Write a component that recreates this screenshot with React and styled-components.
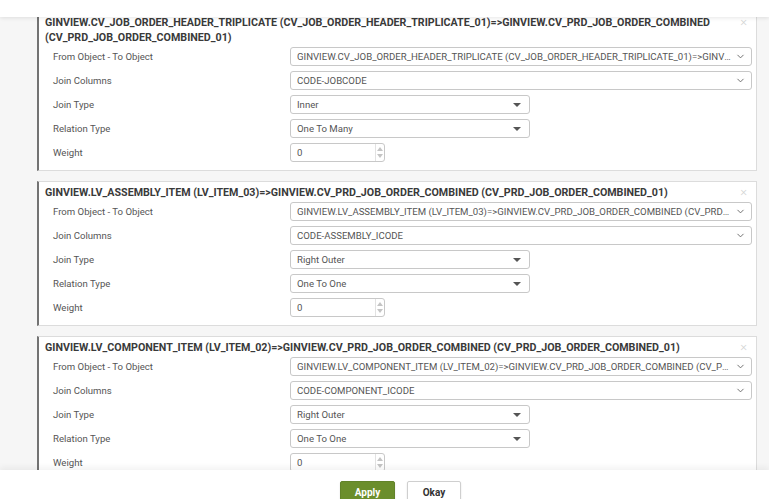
import React from 'react'
import styled, { createGlobalStyle } from 'styled-components'
import { ChevronDown } from 'lucide-react'

const GlobalStyle = createGlobalStyle`
  html, body, #root {
    margin: 0;
    height: 100%;
  }
  body {
    font-family: Roboto, "Liberation Sans", Arial, sans-serif;
    background: #f6f6f6;
    color: #555;
  }
  * { box-sizing: border-box; }
`

const Page = styled.div`
  height: 100vh;
  display: flex;
  flex-direction: column;
  overflow: hidden;
`

const TopBar = styled.div`
  height: 17px;
  flex-shrink: 0;
  background: #fff;
  box-shadow: 0 1px 4px rgba(0, 0, 0, 0.1);
  position: relative;
  z-index: 2;
`

const Body = styled.div`
  flex: 1;
  overflow: hidden;
  padding: 0 12px 0 37px;
`

const List = styled.div`
  display: flex;
  flex-direction: column;
  gap: 10px;
  margin-top: -6px;
`

const Card = styled.div`
  position: relative;
  background: #fff;
  border: 1px solid #dcdcdc;
  border-left: 2px solid #737373;
  padding: 3px 4px 8px 6px;
`

const CardTitle = styled.div`
  font-size: 10.7px;
  font-weight: 700;
  line-height: 15px;
  color: #3a3a3a;
  padding-right: 30px;
  margin-bottom: 2px;
`

const Close = styled.span`
  position: absolute;
  top: 3px;
  right: 9px;
  font-size: 13px;
  line-height: 14px;
  font-weight: 300;
  color: #d4d4d4;
`

const Rows = styled.div`
  display: flex;
  flex-direction: column;
  gap: 5px;
`

const Row = styled.div`
  display: grid;
  grid-template-columns: 245px minmax(0, 1fr);
  align-items: center;
  height: 19px;
`

const Label = styled.label`
  font-size: 9.6px;
  color: #555;
  padding-left: 8px;
`

const Field = styled.div`
  width: ${({ w }) => (w ? `${w}px` : '100%')};
  min-width: 0;
  height: 19px;
  border: 1px solid #c8c8c8;
  border-radius: 3px;
  background: #fff;
  display: flex;
  align-items: center;
  gap: 2px;
  padding: 0 5px 0 6px;
  font-size: 9.6px;
  color: #555;
  overflow: hidden;
`

const FieldText = styled.span`
  flex: 1;
  min-width: 0;
  white-space: nowrap;
  overflow: hidden;
  text-overflow: ellipsis;
`

const Caret = styled.span`
  width: 0;
  height: 0;
  border-left: 4px solid transparent;
  border-right: 4px solid transparent;
  border-top: 4px solid #555;
  margin-right: 3px;
`

const NumberField = styled(Field)`
  padding-right: 0;
`

const Spinner = styled.div`
  width: 9px;
  height: 100%;
  border-left: 1px solid #e2e2e2;
  display: flex;
  flex-direction: column;
  align-items: center;
  justify-content: space-around;
  padding: 2px 0;
`

const SpinArrow = styled.span`
  width: 0;
  height: 0;
  border-left: 3px solid transparent;
  border-right: 3px solid transparent;
  ${({ up }) => (up ? 'border-bottom: 4px solid #c4c4c4;' : 'border-top: 4px solid #c4c4c4;')}
`

const Footer = styled.div`
  height: 29px;
  flex-shrink: 0;
  background: #fff;
  box-shadow: 0 -3px 6px rgba(0, 0, 0, 0.05);
  display: flex;
  justify-content: center;
  gap: 12px;
  padding: 11px 0 0 32px;
  position: relative;
  z-index: 2;
`

const Button = styled.button`
  height: 22px;
  width: ${({ primary }) => (primary ? '55px' : '54px')};
  border-radius: 2px;
  border: 1px solid ${({ primary }) => (primary ? '#62832a' : '#cfcfcf')};
  background: ${({ primary }) => (primary ? '#6b8e2c' : '#fff')};
  color: ${({ primary }) => (primary ? '#fff' : '#333')};
  font-family: Roboto, "Liberation Sans", Arial, sans-serif;
  font-size: 10px;
  font-weight: 700;
  padding: 0;
  box-shadow: 0 1px 2px rgba(0, 0, 0, 0.12);
`

const relations = [
  {
    title:
      'GINVIEW.CV_JOB_ORDER_HEADER_TRIPLICATE (CV_JOB_ORDER_HEADER_TRIPLICATE_01)=>GINVIEW.CV_PRD_JOB_ORDER_COMBINED (CV_PRD_JOB_ORDER_COMBINED_01)',
    columns: 'CODE-JOBCODE',
    joinType: 'Inner',
    relation: 'One To Many',
    weight: 0,
  },
  {
    title:
      'GINVIEW.LV_ASSEMBLY_ITEM (LV_ITEM_03)=>GINVIEW.CV_PRD_JOB_ORDER_COMBINED (CV_PRD_JOB_ORDER_COMBINED_01)',
    columns: 'CODE-ASSEMBLY_ICODE',
    joinType: 'Right Outer',
    relation: 'One To One',
    weight: 0,
  },
  {
    title:
      'GINVIEW.LV_COMPONENT_ITEM (LV_ITEM_02)=>GINVIEW.CV_PRD_JOB_ORDER_COMBINED (CV_PRD_JOB_ORDER_COMBINED_01)',
    columns: 'CODE-COMPONENT_ICODE',
    joinType: 'Right Outer',
    relation: 'One To One',
    weight: 0,
  },
]

const ComboSelect = ({ value }) => (
  <Field>
    <FieldText>{value}</FieldText>
    <ChevronDown size={11} strokeWidth={2} color="#666" />
  </Field>
)

const DropSelect = ({ value }) => (
  <Field w={240}>
    <FieldText>{value}</FieldText>
    <Caret />
  </Field>
)

const RelationCard = ({ item }) => (
  <Card>
    <CardTitle>{item.title}</CardTitle>
    <Close>×</Close>
    <Rows>
      <Row>
        <Label>From Object - To Object</Label>
        <ComboSelect value={item.title} />
      </Row>
      <Row>
        <Label>Join Columns</Label>
        <ComboSelect value={item.columns} />
      </Row>
      <Row>
        <Label>Join Type</Label>
        <DropSelect value={item.joinType} />
      </Row>
      <Row>
        <Label>Relation Type</Label>
        <DropSelect value={item.relation} />
      </Row>
      <Row>
        <Label>Weight</Label>
        <NumberField w={95}>
          <FieldText>{item.weight}</FieldText>
          <Spinner>
            <SpinArrow up />
            <SpinArrow />
          </Spinner>
        </NumberField>
      </Row>
    </Rows>
  </Card>
)

export default function App() {
  return (
    <>
      <GlobalStyle />
      <Page>
        <TopBar />
        <Body>
          <List>
            {relations.map((r) => (
              <RelationCard key={r.title} item={r} />
            ))}
          </List>
        </Body>
        <Footer>
          <Button primary>Apply</Button>
          <Button>Okay</Button>
        </Footer>
      </Page>
    </>
  )
}
